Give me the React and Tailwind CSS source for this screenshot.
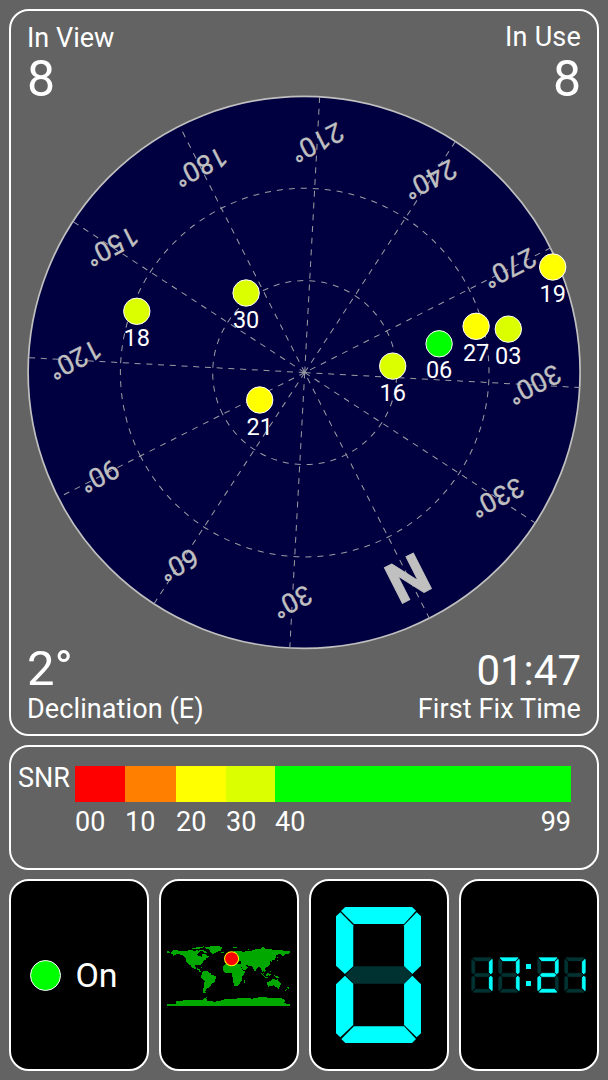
const BEARINGS = [30, 60, 90, 120, 150, 180, 210, 240, 270, 300, 330];

const MINOR_SPOKES = [30, 60, 120, 150, 210, 240, 300, 330];

const HEADING = 153.1;

const SATELLITES = [
  { id: "18", x: -167.3, y: -61, color: "#dcff00" },
  { id: "30", x: -58, y: -79.3, color: "#dcff00" },
  { id: "21", x: -44.4, y: 27.7, color: "#ffff00" },
  { id: "16", x: 88.6, y: -6.2, color: "#dcff00" },
  { id: "06", x: 135, y: -28.5, color: "#00ff00" },
  { id: "27", x: 172, y: -46, color: "#ffff00" },
  { id: "03", x: 204.2, y: -43.2, color: "#dcff00" },
  { id: "19", x: 248.6, y: -105.3, color: "#ffff00" },
];

const SNR_LEVELS = [
  { label: "00", box: "w-[50px]", color: "bg-[#ff0000]" },
  { label: "10", box: "w-[51px]", color: "bg-[#ff8000]" },
  { label: "20", box: "w-[50px]", color: "bg-[#ffff00]" },
  { label: "30", box: "w-[49px]", color: "bg-[#dcff00]" },
  { label: "40", box: "flex-1", color: "bg-[#00ff00]" },
];

// longitude,latitude outlines
const LAND = [
  "-180,70 -174,68 -170,66 -174,63 -180,65",
  "-168,67 -162,71 -156,72 -140,70 -128,71 -115,69 -108,69 -95,69 -94,73 -85,70 -82,67 -87,64 -94,60 -92,57 -82,55 -79,51 -77,56 -78,62 -70,61 -65,59 -60,55 -56,52 -60,50 -66,50 -64,47 -61,46 -70,43 -71,41 -76,37 -76,35 -81,31 -80,25 -83,29 -90,30 -97,28 -97,22 -94,18 -88,21 -88,16 -83,15 -83,10 -78,8 -84,8 -88,13 -95,16 -105,20 -109,25 -114,31 -112,24 -117,32 -124,40 -124,48 -133,56 -145,60 -152,60 -164,54 -160,58 -168,61",
  "-78,8 -72,12 -62,10 -51,4 -50,0 -40,-3 -35,-6 -39,-14 -41,-22 -48,-26 -54,-34 -58,-38 -63,-40 -66,-45 -68,-50 -66,-55 -74,-53 -76,-45 -73,-37 -71,-30 -70,-18 -77,-12 -81,-5 -78,1",
  "-73,78 -62,82 -35,84 -20,82 -20,75 -24,70 -32,68 -42,62 -46,60 -52,65 -54,71 -60,76",
  "-120,76 -105,77 -95,80 -85,82 -70,83 -75,79 -85,76 -98,76 -110,74",
  "-124,73 -105,73 -103,69 -117,70",
  "-90,73 -78,73 -68,69 -62,66 -66,62 -73,65 -74,69 -88,71",
  "-24,66 -14,66 -14,64 -22,63",
  "-9,43 -9,37 -2,37 3,42 10,44 16,38 18,40 13,45 20,41 23,37 27,41 40,41 36,37 36,32 34,28 39,21 43,13 52,16 59,22 51,25 49,30 57,27 67,25 72,20 77,8 80,14 88,22 92,22 95,16 98,10 103,2 100,13 105,9 109,12 107,20 114,23 121,29 120,36 122,40 126,38 127,35 129,37 128,42 135,44 141,53 137,54 143,59 155,60 156,52 163,57 165,61 178,62 180,70 160,71 140,73 113,75 104,78 85,75 70,73 66,68 55,69 44,67 40,65 35,67 41,68 25,71 15,68 5,62 6,58 11,59 16,56 22,60 28,60 20,55 10,54 3,51 -4,48 -1,44",
  "-6,50 1,52 -2,57 -5,58 -6,55",
  "-17,21 -10,31 -6,36 10,37 11,34 20,31 32,31 37,21 43,11 51,12 45,2 40,-5 40,-15 35,-20 35,-25 27,-34 18,-34 12,-18 13,-8 9,0 9,4 4,6 -8,4 -13,9 -17,14",
  "44,-17 50,-14 48,-24 44,-25",
  "113,-22 122,-18 130,-12 136,-12 136,-16 140,-17 142,-11 146,-19 153,-26 150,-37 144,-38 138,-35 131,-31 124,-33 115,-35",
  "144,-40 149,-40 147,-44",
  "131,-1 141,-3 150,-9 138,-8",
  "95,5 104,-2 106,-6 99,1",
  "109,2 117,7 118,0 114,-4 110,-2",
  "105,-6 115,-7 114,-9 106,-8",
  "119,1 125,1 121,-1 123,-5 120,-5",
  "120,18 123,17 122,13 126,8 122,7 120,13",
  "130,32 136,34 141,38 141,45 145,43 140,35 133,33",
  "142,54 145,50 142,46",
  "51,71 58,75 69,77 66,76 55,72",
  "12,80 25,80 18,77",
  "95,80 105,79 98,81",
  "137,76 150,76 142,74",
  "172,-35 178,-38 174,-42",
  "172,-41 174,-42 168,-47 166,-46",
  "-85,22 -75,20 -78,23",
  "-73,20 -68,19 -73,18",
  "80,9 82,7 80,6",
  "-180,-86 -155,-85 -153,-77 -130,-75 -100,-74 -76,-74 -68,-67 -60,-64 -65,-70 -62,-76 -40,-79 -25,-76 -10,-71 20,-70 50,-67 70,-70 90,-66 130,-67 160,-70 166,-78 162,-83 180,-86 180,-91 -180,-91",
];

const SEGMENTS = {
  a: "121,96 322,96 334,107 298,147 147,147 108,108",
  b: "336,112 349,124 349,272 323,297 298,274 298,151",
  c: "323,302 349,328 349,475 336,487 298,450 298,326",
  d: "109,492 147,454 298,454 334,492 322,504 121,504",
  e: "120,302 145,326 145,450 106,487 93,475 93,328",
  f: "106,112 145,151 145,274 120,297 93,272 93,124",
  g: "122,300 147,274 298,274 322,300 298,326 147,326",
};

const DIGITS = {
  0: "abcdef",
  1: "bc",
  2: "abged",
  7: "abc",
};

function Digit({ value, className, gap = 0 }) {
  const lit = DIGITS[value];
  return (
    <svg
      viewBox="93 96 256 408"
      preserveAspectRatio="none"
      className={className}
      aria-hidden
    >
      {Object.entries(SEGMENTS).map(([name, points]) => (
        <polygon
          key={name}
          points={points}
          fill={lit.includes(name) ? "#00ffff" : "#003232"}
          stroke="#000"
          strokeWidth={gap}
        />
      ))}
    </svg>
  );
}

function SkyPlot() {
  return (
    <svg
      viewBox="-277.1 -277.3 554 554"
      className="ml-4 block h-[554px] w-[554px] shrink-0 overflow-visible"
    >
      <circle r="276" fill="#000040" stroke="#c0c0c0" strokeWidth="1.7" />
      <g transform={`translate(0.6 0.3) rotate(${HEADING})`}>
        <g fill="none" stroke="#9c9ca4" strokeWidth="1" strokeDasharray="6 6">
          <circle r="92" />
          <circle r="184.3" />
          <line y1="-276" y2="276" />
          <line x1="-276" x2="276" />
          {MINOR_SPOKES.map((deg) => (
            <line
              key={deg}
              y2="-276"
              strokeDasharray="6 5.74"
              transform={`rotate(${deg})`}
            />
          ))}
        </g>
        <g fill="#c0c0c0" textAnchor="middle">
          <text
            x="1"
            y="-210"
            fontSize="56"
            fontWeight="700"
            stroke="#c0c0c0"
            strokeWidth="1"
          >
            N
          </text>
          {BEARINGS.map((deg) => {
            const rad = (deg * Math.PI) / 180;
            return (
              <text
                key={deg}
                x={230 * Math.sin(rad)}
                y={-230 * Math.cos(rad) + 10}
                fontSize="27"
                stroke="#c0c0c0"
                strokeWidth="0.3"
              >
                {deg}°
              </text>
            );
          })}
        </g>
      </g>
      {SATELLITES.map((sat) => (
        <g key={sat.id} transform={`translate(${sat.x} ${sat.y})`}>
          <circle r="13.2" fill={sat.color} stroke="#fff" strokeWidth="1" />
          <text y="34.5" fontSize="23.5" fill="#fff" textAnchor="middle">
            {sat.id}
          </text>
        </g>
      ))}
    </svg>
  );
}

function WorldMap() {
  return (
    <svg
      viewBox="-180 -90 360 180"
      className="mr-[2px] h-[61.5px] w-[123px] shrink-0 overflow-visible"
    >
      <g transform="scale(1 -1)" fill="#00a800" shapeRendering="crispEdges">
        {LAND.map((points) => (
          <polygon key={points} points={points} />
        ))}
      </g>
      <circle
        cx="9"
        cy="-47"
        r="20.5"
        fill="#ff0000"
        stroke="#ffff00"
        strokeWidth="3"
      />
    </svg>
  );
}

function Card({ children }) {
  return (
    <div className="flex items-center justify-center rounded-[20px] border-2 border-white bg-black">
      {children}
    </div>
  );
}

export default function App() {
  return (
    <div className="flex h-[1080px] w-[608px] flex-col gap-[9px] bg-[#636363] p-[9px] font-['Roboto',sans-serif] text-white">
      <section className="flex h-[727px] shrink-0 flex-col rounded-[20px] border-2 border-white">
        <div className="flex h-[84px] shrink-0 justify-between pr-4 pl-4">
          <div className="pt-[11px]">
            <div className="text-[27px] leading-8">In View</div>
            <div className="pt-px text-[50px] leading-[49px]">8</div>
          </div>
          <div className="pt-[10px] text-right">
            <div className="text-[27px] leading-8 tracking-[0.2px]">In Use</div>
            <div className="pt-0.5 text-[50px] leading-[49px]">8</div>
          </div>
        </div>
        <SkyPlot />
        <div className="flex justify-between pr-4 pl-4">
          <div>
            <div className="text-[49px] leading-[40px]">2°</div>
            <div className="pt-1 text-[27px] leading-8 tracking-[0.1px]">
              Declination (E)
            </div>
          </div>
          <div className="text-right">
            <div className="pt-[3px] text-[42px] leading-[38px]">01:47</div>
            <div className="pt-[3px] text-[27px] leading-8 tracking-[0.1px]">
              First Fix Time
            </div>
          </div>
        </div>
      </section>

      <section className="flex h-[125px] shrink-0 rounded-[20px] border-2 border-white pt-[19px] pl-[7px]">
        <div className="w-[57px] text-[27px] leading-6">SNR</div>
        <div className="w-[496px]">
          <div className="flex h-9">
            {SNR_LEVELS.map((level) => (
              <div key={level.label} className={`${level.box} ${level.color}`} />
            ))}
          </div>
          <div className="flex pt-1 text-[27px] leading-8">
            {SNR_LEVELS.map((level) => (
              <div key={level.label} className={level.box}>
                {level.label}
              </div>
            ))}
            <div>99</div>
          </div>
        </div>
      </section>

      <section className="grid min-h-0 flex-1 grid-cols-4 gap-[10px]">
        <Card>
          <div className="mr-[14px] h-[31px] w-[31px] rounded-full border border-white bg-[#00ff00]" />
          <div className="mr-[10px] text-[34px] leading-10">On</div>
        </Card>
        <Card>
          <WorldMap />
        </Card>
        <Card>
          <Digit value="0" className="mr-px h-[136px] w-[85px]" />
        </Card>
        <Card>
          <div className="mr-0.5 flex items-center">
            <Digit value="1" gap={8} className="h-9 w-[22px]" />
            <Digit value="7" gap={8} className="ml-[5px] h-9 w-[22px]" />
            <div className="mx-[6px] flex flex-col gap-3">
              <div className="h-[5px] w-[5px] bg-[#00ffff]" />
              <div className="h-[5px] w-[5px] bg-[#00ffff]" />
            </div>
            <Digit value="2" gap={8} className="h-9 w-[22px]" />
            <Digit value="1" gap={8} className="ml-[5px] h-9 w-[22px]" />
          </div>
        </Card>
      </section>
    </div>
  );
}
